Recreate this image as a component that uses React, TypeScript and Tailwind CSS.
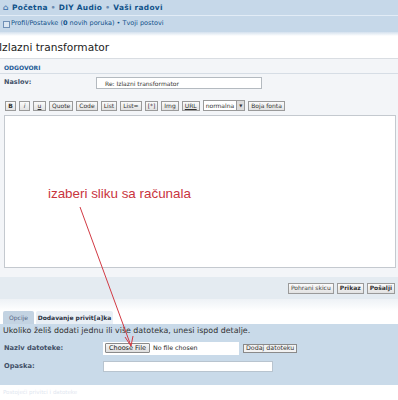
import React from "react";

const btn =
  "h-[10px] px-[2px] flex items-center border border-[#9a9a9a] bg-gradient-to-b from-[#fbfbfb] to-[#e2e2e2] text-[6px] leading-none text-[#333]";

export default function App() {
  return (
    <div className="relative w-[398px] h-[400px] overflow-hidden bg-white font-['DejaVu_Sans',Verdana,sans-serif] text-[#333]">
      {/* nav bars */}
      <div className="h-[15px] bg-[#c6d8e9] flex items-center pl-[3px] text-[7.4px] tracking-[0.3px] font-bold text-[#105289]">
        <span className="mr-[3px] text-[#4a7bb0] text-[8px] leading-none">⌂</span>
        <span>Početna</span>
        <span className="mx-[3px] text-[#6b8bb0]">•</span>
        <span>DIY Audio</span>
        <span className="mx-[3px] text-[#6b8bb0]">•</span>
        <span>Vaši radovi</span>
      </div>
      <div className="h-px bg-[#e2ecf6]" />
      <div className="h-[16px] bg-[#c6d8e9] flex items-center pl-[3px] text-[6.5px] text-[#105289]">
        <span className="w-[7px] h-[7px] mr-[1px] border border-[#6f8fb5] bg-[#dbe6f1] inline-block" />
        <span>Profil/Postavke (<b>0</b> novih poruka)</span>
        <span className="mx-[2px]">•</span>
        <span>Tvoji postovi</span>
      </div>
      <div className="h-[4px] bg-gradient-to-b from-[#d4e1ee] to-white" />

      {/* title */}
      <div className="h-[20px] flex items-end pl-0 -ml-[1px]">
        <span className="text-[10.6px] leading-none pb-[3px] text-[#222]">Izlazni transformator</span>
      </div>

      {/* post panel */}
      <div className="mt-[2px] border-t border-[#d9dde2] bg-[#f3f5f8]">
        <div className="h-[2px]" />
        <div className="h-[13px] border-b border-[#d6dde5] flex items-center pl-[4px] text-[6px] font-bold text-[#1c5a96]">
          ODGOVORI
        </div>
        <div className="h-[22px] flex items-center pl-[4px]">
          <span className="w-[92px] text-[6.5px] font-bold text-[#425067] -mt-[4px]">Naslov:</span>
          <div className="w-[166px] h-[12px] -mt-[4px] border border-[#b4bac0] bg-white flex items-center pl-[8px] text-[6px] text-[#333]">
            Re: Izlazni transformator
          </div>
        </div>
        <div className="h-[17px] flex items-center pl-[5px] gap-[3px] pt-[2px]">
          <div className={btn + " w-[11px] justify-center font-bold"}>B</div>
          <div className={btn + " w-[11px] justify-center italic"}>i</div>
          <div className={btn + " w-[13px] justify-center underline"}>u</div>
          <div className={btn}>Quote</div>
          <div className={btn}>Code</div>
          <div className={btn}>List</div>
          <div className={btn}>List=</div>
          <div className={btn}>[*]</div>
          <div className={btn}>Img</div>
          <div className={btn + " underline"}>URL</div>
          <div className="h-[11px] flex items-center border border-[#9a9a9a] bg-white text-[6px] leading-none">
            <span className="px-[2px]">normalna</span>
            <span className="w-[8px] h-full bg-[#dcdcdc] border-l border-[#9a9a9a] flex items-center justify-center text-[4px]">▼</span>
          </div>
          <div className={btn}>Boja fonta</div>
        </div>
        <div className="pl-[4px] pr-[2px] pt-[2px]">
          <div className="h-[153px] border border-[#c4c9cf] bg-white" />
        </div>
        <div className="h-[9px]" />
        <div className="h-[22px] bg-[#e4ebf1] flex items-center justify-end pr-[3px] gap-[3px]">
          <div className={btn + " h-[11px] text-[#444]"}>Pohrani skicu</div>
          <div className={btn + " h-[11px] font-bold"}>Prikaz</div>
          <div className={btn + " h-[11px] font-bold"}>Pošalji</div>
        </div>
      </div>

      <div className="h-[12px] bg-gradient-to-b from-[#eef2f6] to-white" />

      {/* tabs */}
      <div className="h-[13px] flex items-end pl-[3px] gap-[2px]">
        <div className="h-[13px] w-[31px] bg-[#c3d3e2] flex items-center justify-center text-[6px] text-[#536482] rounded-t-[2px]">
          Opcije
        </div>
        <div className="h-[13px] w-[77px] bg-[#e9eff5] flex items-center justify-center text-[6px] font-bold text-[#28313f] rounded-t-[2px]">
          Dodavanje privit[a]ka
        </div>
      </div>

      {/* attachment panel */}
      <div className="h-[61px] bg-[#c9dae9] pl-[3px]">
        <div className="h-[14px] flex items-center text-[7.9px] text-[#333]">
          Ukoliko želiš dodati jednu ili više datoteka, unesi ispod detalje.
        </div>
        <div className="h-[20px] flex items-center pl-[1px]">
          <span className="w-[99px] text-[6.7px] font-bold text-[#425067]">Naziv datoteke:</span>
          <div className="w-[136px] h-[13px] bg-white flex items-center pl-[2px] text-[6px]">
            <div className="h-[10px] px-[3px] flex items-center border border-[#8a8a8a] rounded-[1px] bg-gradient-to-b from-[#f6f6f6] to-[#dedede] text-[6.5px] leading-none text-[#222]">
              Choose File
            </div>
            <span className="ml-[3px] text-[#222] text-[6.3px]">No file chosen</span>
          </div>
          <div className="ml-[4px] h-[9px] px-[2px] flex items-center border border-[#8a8a8a] bg-[#f2f2f2] text-[6.3px] leading-none text-[#333]">
            Dodaj datoteku
          </div>
        </div>
        <div className="h-[16px] flex items-center pl-[1px]">
          <span className="w-[99px] text-[6.7px] font-bold text-[#425067]">Opaska:</span>
          <div className="w-[170px] h-[11px] bg-white border border-[#b8c4cf]" />
        </div>
      </div>
      <div className="h-[15px] flex items-center pl-[3px] text-[5.5px] text-[#dfe7f0]">
        Postojeći privitci i datoteke
      </div>

      {/* annotation */}
      <div className="absolute left-[48px] top-[187px] text-[13.4px] leading-none text-[#c9343d] font-['Liberation_Sans',Arial,sans-serif]">
        izaberi sliku sa računala
      </div>
      <svg className="absolute left-0 top-0" width="398" height="400" viewBox="0 0 398 400">
        <line x1="80" y1="207" x2="131" y2="346" stroke="#d23a44" strokeWidth="1" />
        <line x1="131" y1="346" x2="125" y2="337" stroke="#d23a44" strokeWidth="1" />
        <line x1="131" y1="346" x2="133" y2="336" stroke="#d23a44" strokeWidth="1" />
      </svg>
    </div>
  );
}
